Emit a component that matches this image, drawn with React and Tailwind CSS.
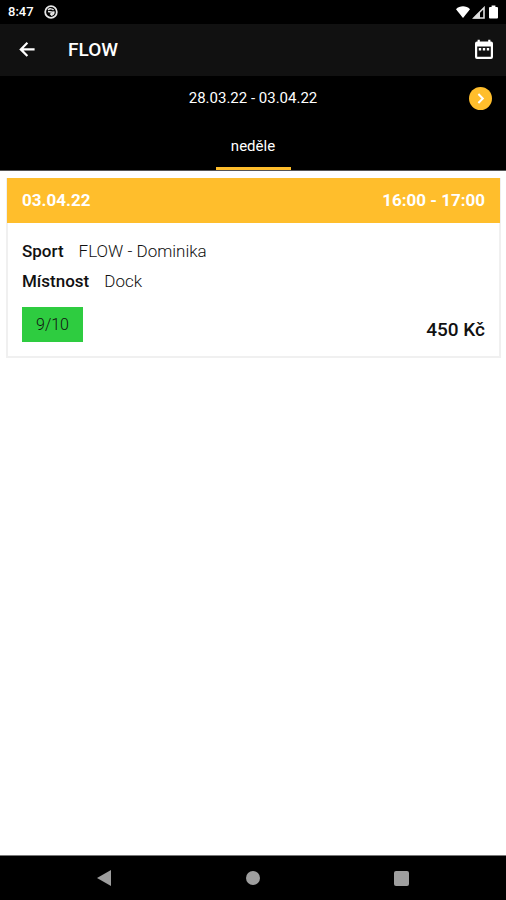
import React, { useState } from "react";

const days = ["neděle"];

const lessons = [
  {
    id: 1,
    date: "03.04.22",
    time: "16:00 - 17:00",
    sport: "FLOW - Dominika",
    room: "Dock",
    capacity: "9/10",
    price: "450 Kč",
  },
];

const StatusBar = () => (
  <div className="h-6 px-2 flex items-center justify-between bg-black text-white">
    <div className="flex items-center gap-[10px]">
      <span className="text-[13px] leading-4 font-medium">8:47</span>
      <svg width="14" height="14" viewBox="0 0 14 14" fill="none" aria-hidden="true">
        <circle cx="7" cy="7" r="5.8" stroke="#e8e8e8" strokeWidth="1.8" />
        <path
          d="M4 4.8C5.4 3.6 8.4 3.4 9.6 5.2M4 6.4L8.8 7.2L6.2 9.6M9.8 6.4C10.4 8.4 9 10.2 7 10.2"
          stroke="#e8e8e8"
          strokeWidth="1.5"
        />
      </svg>
    </div>
    <div className="flex items-center gap-[2px] -mr-[2px]">
      {/* wifi */}
      <svg width="14" height="12" viewBox="0 0 14 12" fill="#fff" aria-hidden="true">
        <path d="M7 12L0 3.2C3.8-.6 10.2-.6 14 3.2Z" />
      </svg>
      {/* signal */}
      <svg width="13" height="13" viewBox="0 0 13 13" aria-hidden="true">
        <path d="M1.8 12L12 1.8V12Z" fill="none" stroke="#e0e0e0" strokeWidth="1.6" />
        <path d="M1 12.6L8 5.6V12.6Z" fill="#e0e0e0" />
      </svg>
      {/* battery */}
      <svg width="13" height="14" viewBox="0 0 13 14" fill="#fff" aria-hidden="true">
        <path d="M4.6 .5H8.4V2H10Q11 2 11 3V12.5Q11 13.5 10 13.5H3Q2 13.5 2 12.5V3Q2 2 3 2H4.6Z" />
      </svg>
    </div>
  </div>
);

const LessonCard = ({ lesson }) => (
  <article className="border-2 border-t-0 border-[#f0f0f0] bg-white">
    <div className="-mx-px h-[45px] px-[15px] flex items-center justify-between bg-[#ffbe2c] text-white text-[17px] font-bold">
      <span>{lesson.date}</span>
      <span>{lesson.time}</span>
    </div>
    <div className="px-[14px] pt-4 pb-[14px] text-[17px] leading-6 text-[#111]">
      <dl className="flex flex-col gap-[6px]">
        <div className="flex gap-[15px]">
          <dt className="font-medium">Sport</dt>
          <dd className="font-light">{lesson.sport}</dd>
        </div>
        <div className="flex gap-[15px]">
          <dt className="font-medium">Místnost</dt>
          <dd className="font-light">{lesson.room}</dd>
        </div>
      </dl>
      <div className="mt-[14px] flex items-end justify-between">
        <span className="h-[35px] px-[14px] flex items-center bg-[#2ecc40] text-base font-light">
          {lesson.capacity}
        </span>
        <span className="text-[19px] leading-6 font-medium">{lesson.price}</span>
      </div>
    </div>
  </article>
);

const App = () => {
  const [activeDay, setActiveDay] = useState("neděle");

  return (
    <div className="min-h-screen flex flex-col bg-white font-['Roboto',sans-serif]">
      <StatusBar />

      {/* App bar */}
      <header className="h-[52px] pl-4 pr-[11px] flex items-center bg-[#111] text-white">
        <button type="button" aria-label="Back" className="w-[22px] h-[22px] flex items-center justify-center">
          <svg width="22" height="22" viewBox="0 0 22 22" fill="none" aria-hidden="true">
            <path d="M18.6 10.4H5M11.4 3.8L4.8 10.4L11.4 17" stroke="#fff" strokeWidth="2.2" />
          </svg>
        </button>
        <h1 className="ml-[30px] text-[19px] font-medium">FLOW</h1>
        <button type="button" aria-label="Calendar" className="ml-auto w-[22px] h-[22px] flex items-center justify-center">
          <svg width="22" height="22" viewBox="0 0 22 22" aria-hidden="true">
            <path
              fillRule="evenodd"
              fill="#fff"
              d="M4.6 .8H6.8V2.6H15.2V.8H17.4V2.6H18Q20 2.6 20 4.6V18Q20 20 18 20H4Q2 20 2 18V4.6Q2 2.6 4 2.6H4.6ZM4.2 7.4V17.8H17.8V7.4Z"
            />
            <path fill="#fff" d="M5.8 9H8.2V11.4H5.8ZM9.8 9H12.2V11.4H9.8ZM13.8 9H16.2V11.4H13.8Z" />
          </svg>
        </button>
      </header>

      {/* Week switch and day tabs */}
      <div className="bg-black text-white border-b border-[#555]">
        <div className="h-[45px] px-[14px] grid grid-cols-[1fr_auto_1fr] items-center">
          <p className="col-start-2 text-[15px]">28.03.22 - 03.04.22</p>
          <button
            type="button"
            aria-label="Next week"
            className="justify-self-end w-[23px] h-[23px] rounded-full bg-[#ffbe2c] flex items-center justify-center"
          >
            <svg width="11" height="13" viewBox="0 0 11 13" fill="none" aria-hidden="true">
              <path d="M3.4 2L7.8 6.5L3.4 11" stroke="#fff" strokeWidth="2" />
            </svg>
          </button>
        </div>
        <nav className="flex justify-center">
          {days.map((day) => (
            <button
              key={day}
              type="button"
              onClick={() => setActiveDay(day)}
              className={`w-[75px] h-[49px] pt-1 border-b-3 text-[15px] ${
                day === activeDay ? "border-[#ffbe2c]" : "border-transparent"
              }`}
            >
              {day}
            </button>
          ))}
        </nav>
      </div>

      <main className="flex-1 pl-[6px] pr-[5px] pt-[7px] flex flex-col gap-2">
        {lessons.map((lesson) => (
          <LessonCard key={lesson.id} lesson={lesson} />
        ))}
      </main>

      {/* System navigation */}
      <footer className="h-[45px] px-[30px] grid grid-cols-3 items-center justify-items-center bg-black border-t border-[#777]">
        <button type="button" aria-label="System back">
          <svg width="14" height="16" viewBox="0 0 14 16" fill="#9e9e9e" aria-hidden="true">
            <path d="M14 0V16L0 8Z" />
          </svg>
        </button>
        <button type="button" aria-label="Home" className="w-[14px] h-[14px] rounded-full bg-[#9e9e9e]" />
        <button type="button" aria-label="Recent apps" className="w-[15px] h-[15px] rounded-xs bg-[#9e9e9e]" />
      </footer>
    </div>
  );
};

export default App;
